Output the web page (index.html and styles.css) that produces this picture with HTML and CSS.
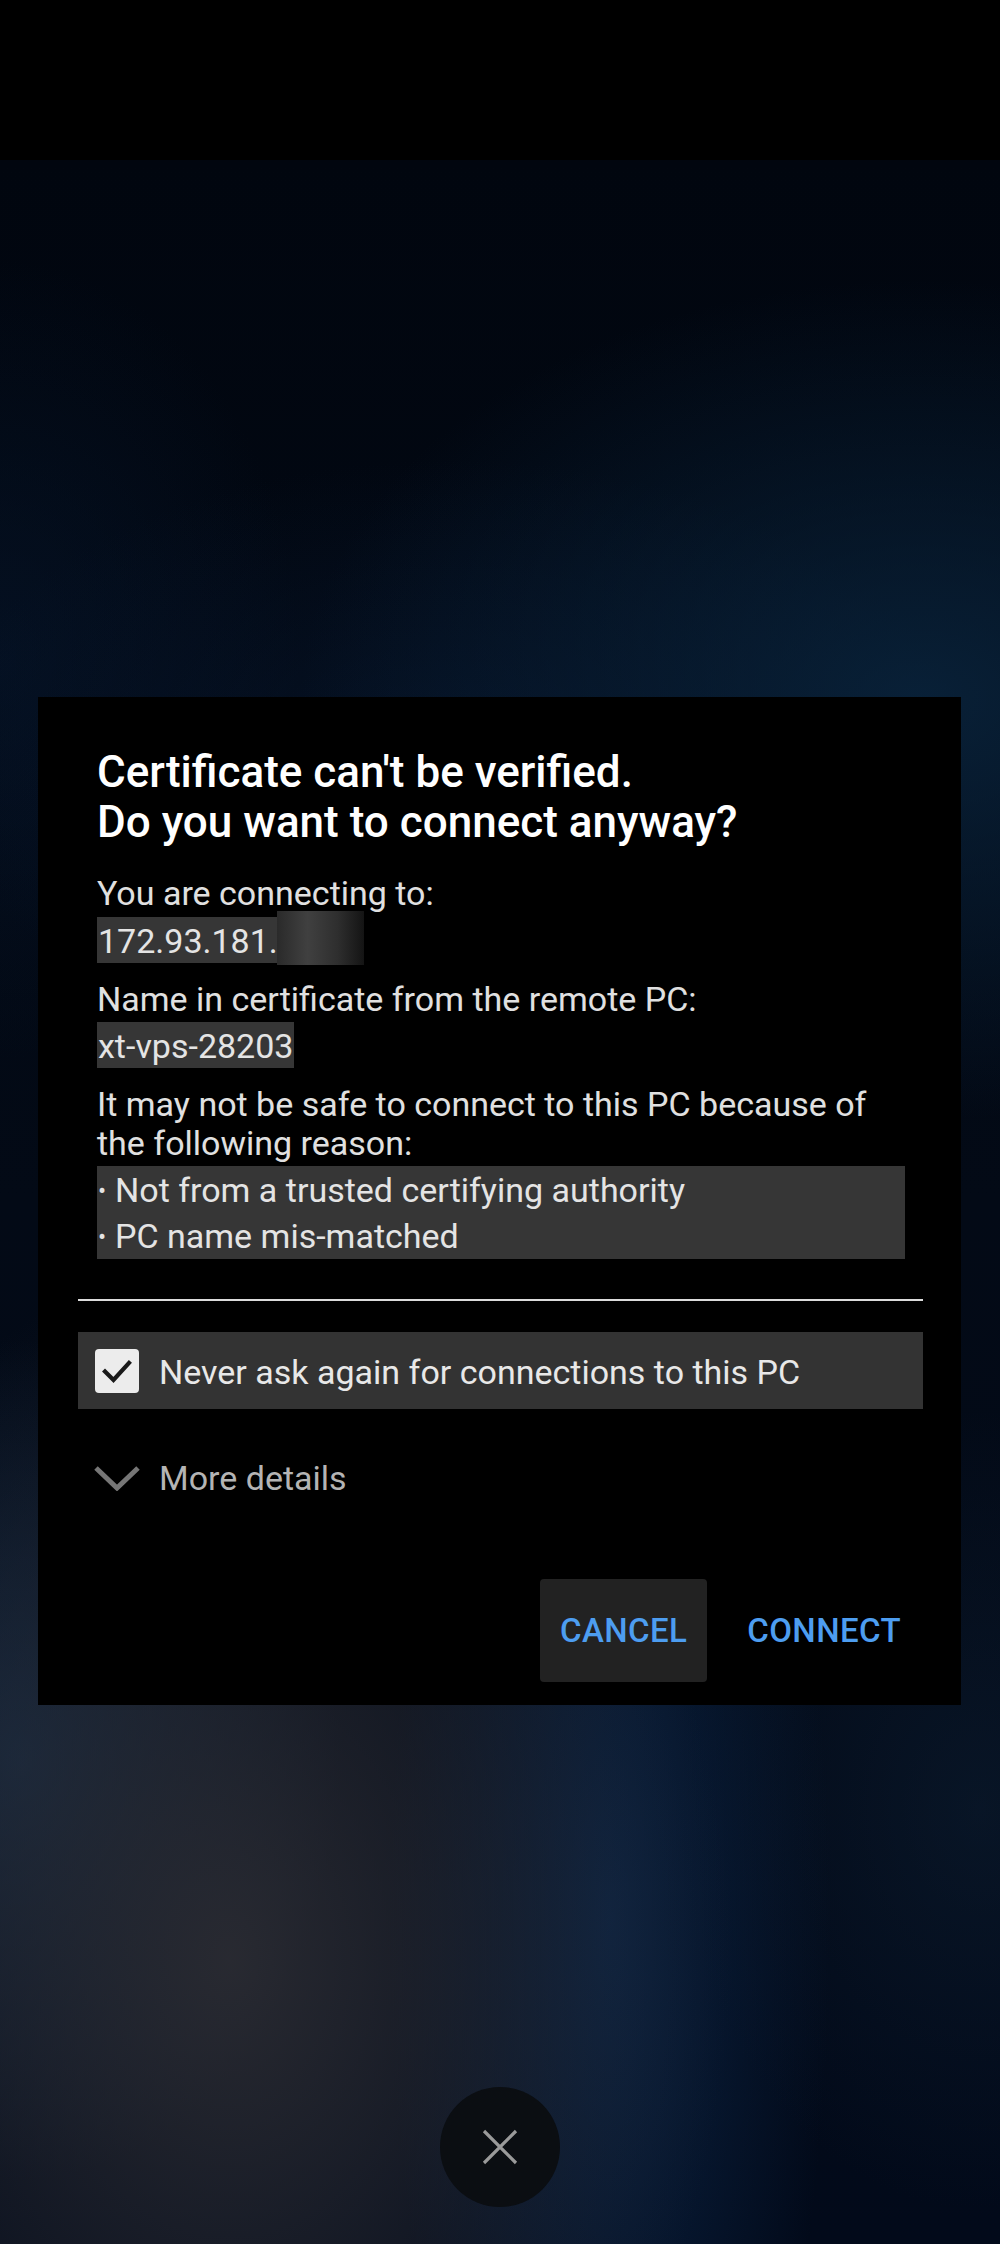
FILE: index.html
```html
<!DOCTYPE html>
<html lang="en">
<head>
<meta charset="utf-8">
<title>Certificate can't be verified</title>
<link rel="stylesheet" href="styles.css">
</head>
<body>
<div class="screen">
  <div class="topbar"></div>
  <main class="stage">
    <section class="dialog" role="dialog" aria-labelledby="dlg-title">
      <div class="content">
        <h1 class="title" id="dlg-title">Certificate can't be verified.<br>Do you want to connect anyway?</h1>
        <p class="label first">You are connecting to:</p>
        <div class="value ip"><span class="ip-text">172.93.181.</span><span class="redact"></span></div>
        <p class="label">Name in certificate from the remote PC:</p>
        <div class="value">xt-vps-28203</div>
        <p class="label">It may not be safe to connect to this PC because of<br>the following reason:</p>
        <ul class="reasons">
          <li>Not from a trusted certifying authority</li>
          <li>PC name mis-matched</li>
        </ul>
      </div>
      <hr class="divider">
      <label class="check-row">
        <span class="checkbox">
          <svg viewBox="0 0 44 44" width="44" height="44" aria-hidden="true"><path d="M10 22.5 L18.5 31 L34 14" fill="none" stroke="#1a1a1a" stroke-width="4.2" stroke-linecap="square" stroke-linejoin="miter"/></svg>
        </span>
        <span class="check-text">Never ask again for connections to this PC</span>
      </label>
      <div class="more">
        <svg class="chev" viewBox="0 0 48 26" width="48" height="26" aria-hidden="true"><path d="M3 3 L24 23 L45 3" fill="none" stroke="#767676" stroke-width="5"/></svg>
        <span class="more-text">More details</span>
      </div>
      <div class="actions">
        <button class="btn btn-cancel" type="button">CANCEL</button>
        <button class="btn" type="button">CONNECT</button>
      </div>
    </section>
    <button class="close" type="button" aria-label="Close">
      <svg viewBox="0 0 36 36" width="36" height="36" aria-hidden="true"><path d="M2 2 L34 34 M34 2 L2 34" stroke="#9a9a9a" stroke-width="3.2" fill="none"/></svg>
    </button>
  </main>
</div>
</body>
</html>
```

FILE: styles.css
```css
* { box-sizing: border-box; }
html, body {
  margin: 0;
  padding: 0;
  background: #000;
}
body {
  width: 1000px;
  height: 2244px;
  overflow: hidden;
  font-family: Roboto, "Noto Sans", "Liberation Sans", sans-serif;
  color: #e2e2e2;
}
.screen {
  width: 1000px;
  height: 2244px;
  display: flex;
  flex-direction: column;
}
.topbar {
  height: 160px;
  background: #000;
  flex: none;
}
.stage {
  flex: 1;
  display: flex;
  flex-direction: column;
  align-items: flex-start;
  background:
    radial-gradient(ellipse 500px 700px at 230px 1800px, rgba(42,43,50,0.95), rgba(42,43,50,0) 100%),
    radial-gradient(ellipse 220px 760px at 610px 1760px, rgba(12,38,72,0.85), rgba(12,38,72,0) 100%),
    radial-gradient(ellipse 320px 420px at 20px 1600px, rgba(24,50,80,0.7), rgba(24,50,80,0) 100%),
    radial-gradient(ellipse 300px 400px at 980px 1650px, rgba(14,32,52,0.5), rgba(14,32,52,0) 100%),
    radial-gradient(ellipse 620px 420px at 920px 540px, rgba(10,38,64,0.8), rgba(10,38,64,0) 100%),
    radial-gradient(ellipse 520px 300px at 450px 600px, rgba(8,26,52,0.55), rgba(8,26,52,0) 100%),
    radial-gradient(ellipse 300px 400px at 0px 500px, rgba(6,22,44,0.6), rgba(6,22,44,0) 100%),
    linear-gradient(180deg, #01060f 0%, #030a16 50%, #020a1a 100%);
}
.dialog {
  margin: 537px 0 0 38px;
  width: 923px;
  background: #000;
  padding: 50px 38px 23px 40px;
  display: flex;
  flex-direction: column;
}
.content {
  padding: 0 18px 0 19px;
}
.title {
  margin: 0;
  font-size: 44px;
  line-height: 50px;
  font-weight: 500;
  color: #fff;
}
.label {
  margin: 17px 0 0 0;
  font-size: 34px;
  line-height: 39px;
  color: #e0e0e0;
}
.label.first { margin-top: 27px; }
.value {
  display: inline-block;
  margin-top: 3px;
  background: #363636;
  font-size: 34px;
  line-height: 44px;
  height: 46px;
  padding: 2px 1px 0 1px;
  color: #e4e4e4;
}
.ip {
  display: inline-flex;
  align-items: stretch;
  margin-top: 4px;
  background: none;
  padding: 0;
}
.ip-text {
  background: #363636;
  padding: 2px 0 0 1px;
  width: 180px;
  overflow: hidden;
  white-space: nowrap;
}
.redact {
  width: 87px;
  margin: -6px 0 -2px 0;
  background: linear-gradient(90deg, #2a2a2a 0%, #404040 35%, #2e2e2e 70%, #141414 100%);
}
.reasons {
  list-style: none;
  margin: 3px 0 0 0;
  padding: 0 0 1px 1px;
  background: #363636;
}
.reasons li {
  font-size: 34px;
  line-height: 44px;
  height: 46px;
  padding-top: 2px;
  color: #e4e4e4;
}
.reasons li::before {
  content: "\2022";
  display: inline-block;
  width: 17px;
  font-size: 24px;
  vertical-align: 3px;
}
.divider {
  margin: 40px 0 0 0;
  border: 0;
  height: 2px;
  background: #dcdcdc;
}
.check-row {
  margin-top: 31px;
  height: 77px;
  background: #333;
  display: flex;
  align-items: center;
  padding-left: 17px;
  gap: 20px;
}
.checkbox {
  width: 44px;
  height: 44px;
  border-radius: 4px;
  background: #ececec;
  display: flex;
}
.check-text {
  font-size: 34px;
  color: #e8e8e8;
  padding-top: 2px;
}
.more {
  margin-top: 49px;
  display: flex;
  align-items: center;
  padding-left: 15px;
  gap: 18px;
  height: 40px;
}
.chev { flex: none; }
.more-text {
  font-size: 34px;
  line-height: 40px;
  color: #b4b4b4;
}
.actions {
  margin-top: 81px;
  display: flex;
  justify-content: flex-end;
  gap: 20px;
  padding-right: 2px;
}
.btn {
  height: 103px;
  padding: 0 20px;
  border: 0;
  border-radius: 4px;
  background: transparent;
  color: #4d9df0;
  font-family: Roboto, "Noto Sans", "Liberation Sans", sans-serif;
  font-size: 33px;
  font-weight: 500;
  letter-spacing: 0.4px;
}
.btn-cancel {
  background: #222;
}
.close {
  margin: 382px 0 0 440px;
  width: 120px;
  height: 120px;
  border-radius: 50%;
  border: 0;
  padding: 0;
  background: #0b0e12;
  display: flex;
  align-items: center;
  justify-content: center;
}
```
